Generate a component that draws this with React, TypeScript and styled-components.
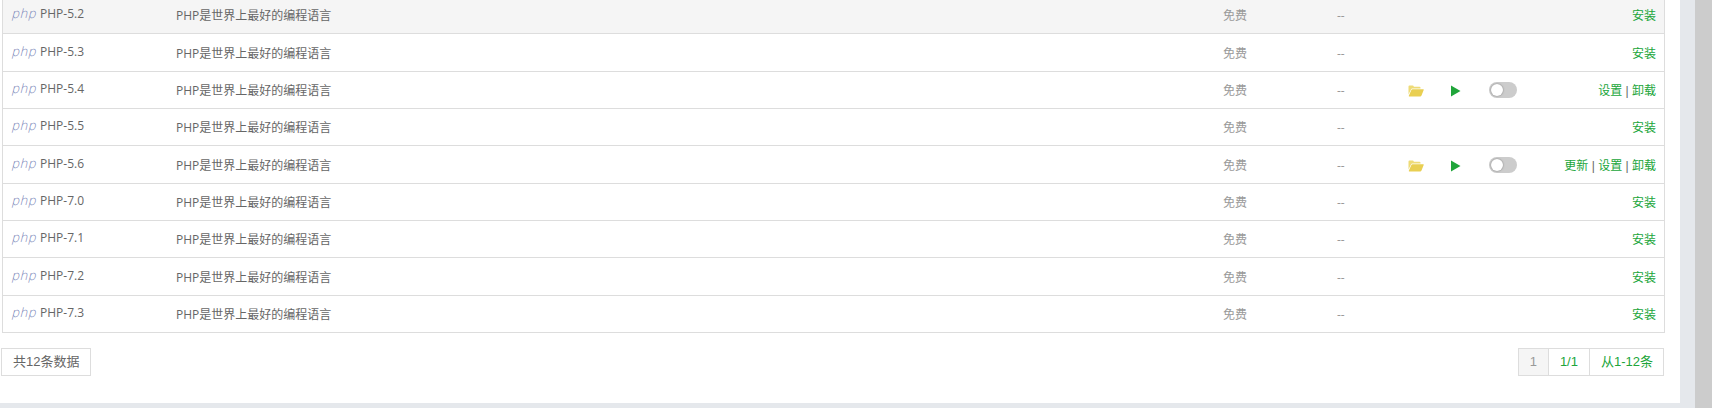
import React from "react";
import styled, { createGlobalStyle } from "styled-components";

const GREEN = "#20a53a";

const GlobalStyle = createGlobalStyle`
  *, *::before, *::after { box-sizing: border-box; }
  body {
    margin: 0;
    background: #cccccc;
    color: #666;
    font: 12px/18px "Open Sans", "Noto Sans CJK SC", sans-serif;
  }
`;

const Page = styled.div`
  margin-right: 17px;
  padding-right: 15px;
  padding-bottom: 5px;
  background: #e5e8ec;
  overflow: hidden;
`;

const Card = styled.main`
  padding: 0 15px 27px 2px;
  background: #fff;
`;

const SoftwareTable = styled.table`
  width: 100%;
  margin-top: -3px;
  table-layout: fixed;
  border-collapse: separate;
  border-spacing: 0;
  border: solid #ddd;
  border-width: 0 1px;
`;

const Col = styled.col<{ $width?: number }>`
  width: ${({ $width }) => ($width ? `${$width}px` : "auto")};
`;

const Row = styled.tr`
  height: 37px;
  &:nth-child(3n + 2) { height: 38px; }
  &:first-child { background: #f5f5f5; }
`;

const Cell = styled.td<{ $muted?: boolean }>`
  padding: 2px 8px 0;
  border-bottom: 1px solid #ddd;
  vertical-align: middle;
  white-space: nowrap;
  color: ${({ $muted }) => ($muted ? "#999" : "#666")};
`;

const NameCell = styled(Cell)`
  padding: 0 8px 2px;
`;

const ActionCell = styled(Cell)`
  font-family: "Liberation Sans", "Noto Sans CJK SC", sans-serif;
  text-align: right;
`;

const Name = styled.div`
  display: flex;
  align-items: center;
  gap: 5px;
`;

const PhpMark = styled.span`
  width: 24px;
  color: #7481b5;
  font: italic 200 13px/18px "DejaVu Sans Light", "DejaVu Sans", sans-serif;
`;

const IconButton = styled.button`
  display: flex;
  padding: 0;
  border: 0;
  background: none;
  cursor: pointer;
`;

const Switch = styled.input`
  display: block;
  appearance: none;
  width: 28px;
  height: 16px;
  margin: 0;
  border-radius: 8px;
  background: #ccc;
  cursor: pointer;
  &::before {
    content: "";
    display: block;
    width: 12px;
    height: 12px;
    margin: 2px;
    border-radius: 50%;
    background: #fff;
    box-shadow: 0 0 2px #777;
  }
  &:checked { background: ${GREEN}; }
  &:checked::before { margin-left: 14px; }
`;

const SwitchCell = styled(Cell)`
  padding-top: 0;
`;

const Link = styled.a`
  color: ${GREEN};
  text-decoration: none;
`;

const Footer = styled.footer`
  display: flex;
  justify-content: space-between;
  margin: 15px 1px 0 -1px;
  font: 13px/18px "Liberation Sans", "Noto Sans CJK SC", sans-serif;
`;

const Total = styled.div`
  padding: 4px 11px;
  border: 1px solid #ddd;
`;

const Pager = styled.nav`
  display: flex;
  border: 1px solid #ddd;
`;

const PagerItem = styled.span<{ $current?: boolean }>`
  padding: 4px 11px;
  color: ${({ $current }) => ($current ? "#999" : GREEN)};
  background: ${({ $current }) => ($current ? "#f5f5f5" : "#fff")};
  & + & { border-left: 1px solid #ddd; }
  &:last-child { padding-right: 10px; }
`;

const FolderIcon = () => (
  <svg width="16" height="12" viewBox="0 0 16 12" aria-hidden="true">
    <path d="M.5 9.5V1.5Q.5.5 1.5.5h3.2q.8 0 1.2 1.2h5.6q1 0 1 1v.8H4.3Q3.4 3.5 3 4.4z" fill="#eedb76" />
    <path d="M4.5 4.2h10.8q.7 0 .4.7l-2.2 5.7q-.3.8-1 .8H1.2q-.6 0-.4-.6L3.4 5q.3-.8 1.1-.8z" fill="#e9cf52" />
  </svg>
);

const PlayIcon = () => (
  <svg width="10" height="12" viewBox="0 0 10 12" aria-hidden="true">
    <path d="M0 .5v11L9.5 6z" fill={GREEN} />
  </svg>
);

type Software = { version: string; actions: string[] };

const INSTALL = ["安装"];

const SOFTWARE: Software[] = [
  { version: "5.2", actions: INSTALL },
  { version: "5.3", actions: INSTALL },
  { version: "5.4", actions: ["设置", "卸载"] },
  { version: "5.5", actions: INSTALL },
  { version: "5.6", actions: ["更新", "设置", "卸载"] },
  { version: "7.0", actions: INSTALL },
  { version: "7.1", actions: INSTALL },
  { version: "7.2", actions: INSTALL },
  { version: "7.3", actions: INSTALL },
];

const SoftwareRow = ({ version, actions }: Software) => {
  const name = `PHP-${version}`;
  const installed = actions !== INSTALL;
  return (
    <Row>
      <NameCell>
        <Name>
          <PhpMark>php</PhpMark>
          <span>{name}</span>
        </Name>
      </NameCell>
      <Cell>PHP是世界上最好的编程语言</Cell>
      <Cell $muted>免费</Cell>
      <Cell $muted>--</Cell>
      <Cell>
        {installed && (
          <IconButton type="button" aria-label={`${name} 目录`}><FolderIcon /></IconButton>
        )}
      </Cell>
      <Cell>
        {installed && (
          <IconButton type="button" aria-label={`${name} 启动`}><PlayIcon /></IconButton>
        )}
      </Cell>
      <SwitchCell>{installed && <Switch type="checkbox" aria-label={`${name} 首页显示`} />}</SwitchCell>
      <ActionCell>
        {actions.map((action, i) => (
          <React.Fragment key={action}>
            {i > 0 && " | "}
            <Link href="#">{action}</Link>
          </React.Fragment>
        ))}
      </ActionCell>
    </Row>
  );
};

export default function App() {
  return (
    <>
      <GlobalStyle />
      <Page>
        <Card>
          <SoftwareTable>
            <colgroup>
              <Col $width={165} />
              <Col />
              <Col $width={114} />
              <Col $width={71} />
              <Col $width={43} />
              <Col $width={38} />
              <Col $width={46} />
              <Col $width={137} />
            </colgroup>
            <tbody>
              {SOFTWARE.map((item) => (
                <SoftwareRow key={item.version} {...item} />
              ))}
            </tbody>
          </SoftwareTable>
          <Footer>
            <Total>共12条数据</Total>
            <Pager aria-label="分页">
              <PagerItem $current>1</PagerItem>
              <PagerItem>1/1</PagerItem>
              <PagerItem>从1-12条</PagerItem>
            </Pager>
          </Footer>
        </Card>
      </Page>
    </>
  );
}
